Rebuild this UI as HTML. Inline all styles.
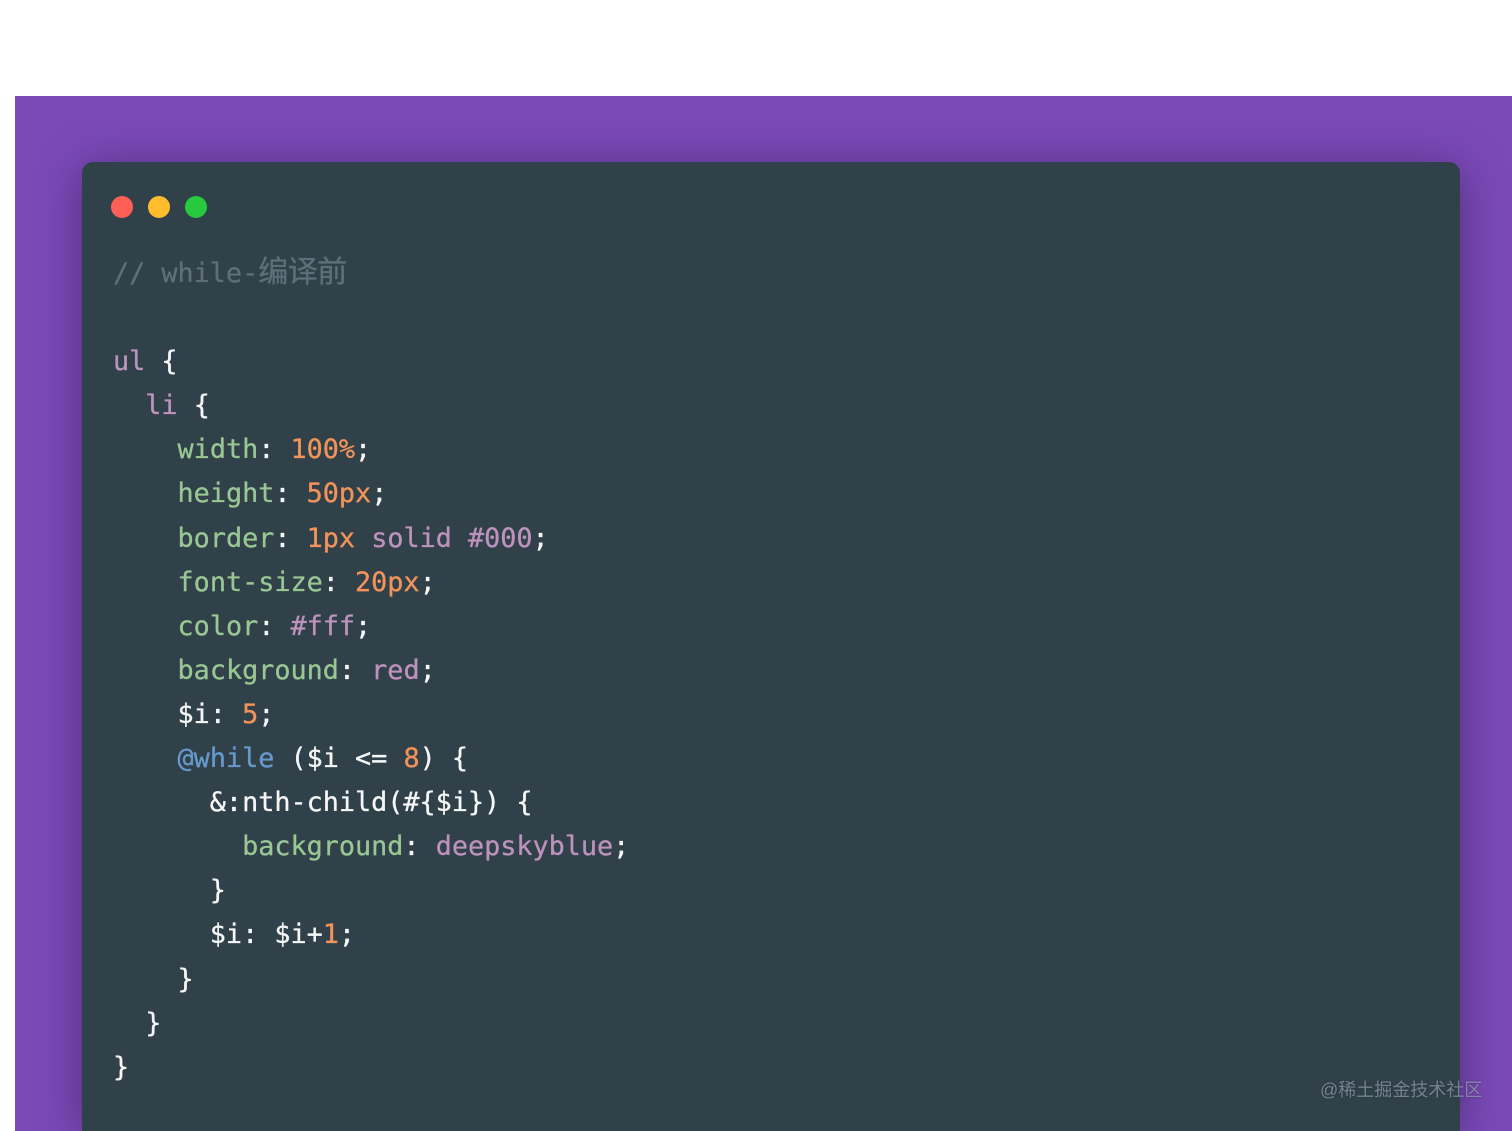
<!DOCTYPE html>
<html><head><meta charset="utf-8"><style>
html,body{margin:0;padding:0;background:#fff;width:1512px;height:1131px;overflow:hidden}
#bg{position:absolute;left:15px;top:96px;width:1497px;height:1035px;background:#7b4ab7}
#card{position:absolute;left:82px;top:162px;width:1378px;height:969px;background:#30414a;border-radius:11px 11px 0 0;box-shadow:0 6px 44px rgba(40,15,70,.5)}
.d{position:absolute;top:196px;width:22px;height:22px;border-radius:50%}
pre{position:absolute;left:113px;top:247px;margin:0;font:26.8px/44.1px "DejaVu Sans Mono","Liberation Mono","Noto Sans CJK SC",monospace;color:#f5f7f7;letter-spacing:0;-webkit-text-stroke:.3px currentColor}
.c{color:#5f6f78}.z{font-family:"Noto Sans CJK SC",sans-serif;font-size:30px;letter-spacing:-.5px}
.t{color:#bd93bd}.g{color:#99c794}.o{color:#f2935a}.b{color:#6699cc}
#w{position:absolute;left:1320px;top:1078px;font:18px/24px "Liberation Sans","Noto Sans CJK SC",sans-serif;color:rgba(165,180,190,.6);white-space:nowrap;text-shadow:0 0 2px rgba(20,30,40,.35)}
</style></head><body>
<div id="bg"></div><div id="card"></div>
<div class="d" style="left:111px;background:#ff5f56"></div>
<div class="d" style="left:148px;background:#ffbd2e"></div>
<div class="d" style="left:184.5px;background:#27c93f"></div>
<pre><span class="c">// while-<span class="z">编译前</span></span>

<span class="t">ul</span> {
  <span class="t">li</span> {
    <span class="g">width</span>: <span class="o">100%</span>;
    <span class="g">height</span>: <span class="o">50px</span>;
    <span class="g">border</span>: <span class="o">1px</span> <span class="t">solid</span> <span class="t">#000</span>;
    <span class="g">font-size</span>: <span class="o">20px</span>;
    <span class="g">color</span>: <span class="t">#fff</span>;
    <span class="g">background</span>: <span class="t">red</span>;
    $i: <span class="o">5</span>;
    <span class="b">@while</span> ($i &lt;= <span class="o">8</span>) {
      &amp;:nth-child(#{$i}) {
        <span class="g">background</span>: <span class="t">deepskyblue</span>;
      }
      $i: $i+<span class="o">1</span>;
    }
  }
}</pre>
<div id="w">@稀土掘金技术社区</div>
</body></html>
